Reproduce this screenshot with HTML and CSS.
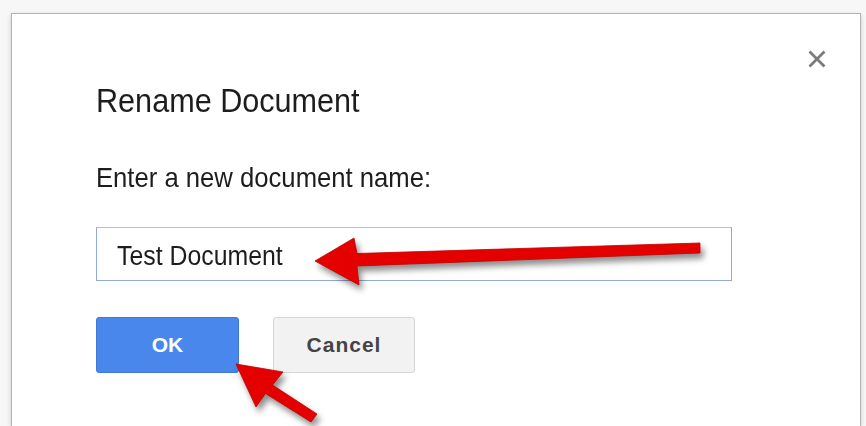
FILE: index.html
```html
<!DOCTYPE html>
<html lang="en">
<head>
<meta charset="utf-8">
<title>Rename Document</title>
<link rel="stylesheet" href="styles.css">
</head>
<body>
  <div class="dialog" role="dialog" aria-labelledby="dlg-title">
    <button class="close" aria-label="Close">
      <svg width="20" height="20" viewBox="0 0 20 20">
        <path d="M3.5 3.5 L16.5 16.5 M16.5 3.5 L3.5 16.5" stroke="#7c7c7c" stroke-width="2.8" stroke-linecap="square" fill="none"/>
      </svg>
    </button>
    <h1 class="title" id="dlg-title"><span class="cond">Rename Document</span></h1>
    <p class="label"><span class="cond">Enter a new document name:</span></p>
    <div class="field" role="textbox"><span class="cond field-text">Test Document</span></div>
    <div class="actions">
      <button class="btn btn-ok">OK</button>
      <button class="btn btn-cancel">Cancel</button>
    </div>
  </div>

  <!-- red callout arrows drawn over the dialog -->
  <svg class="callouts" width="866" height="426" viewBox="0 0 866 426">
    <g class="arrow">
      <path d="M700 243 L357 253.5 L354 238 L315 261 L359 285 L357 266 L700 253 Z"/>
      <path d="M236 364 L283 372 L272.5 385 L317 414 L311 422 L265.5 393.5 L256 407 Z"/>
    </g>
  </svg>
</body>
</html>
```

FILE: styles.css
```css
html, body {
  margin: 0;
  height: 426px;
  overflow: hidden;
}

body {
  background: #f7f7f7;
  padding: 13px 0 0 11px;
  box-sizing: border-box;
  font-family: "Liberation Sans", Arial, sans-serif;
  color: #1d1d1d;
}

/* the dialog runs on below the visible area, so its bottom edge is open */
.dialog {
  position: relative;
  box-sizing: border-box;
  width: 850px;
  height: 100%;
  background: #fff;
  border: 1px solid #b4b4b4;
  border-bottom: 0;
  box-shadow: 0 2px 5px rgba(0, 0, 0, 0.18);
  padding: 66px 0 0 84px;
}

/* slightly condensed text rendering */
.cond {
  display: inline-block;
  transform: scaleX(0.9);
  transform-origin: left center;
  white-space: nowrap;
}

.close {
  position: absolute;
  top: 35px;
  right: 33px;
  width: 20px;
  height: 20px;
  padding: 0;
  border: 0;
  background: none;
  cursor: pointer;
}

.close svg {
  display: block;
  filter: blur(0.5px);
}

.title {
  margin: 0;
  font-size: 34px;
  line-height: 40px;
  font-weight: normal;
  color: #1d1d1d;
}

.label {
  margin: 40px 0 0;
  font-size: 28.5px;
  line-height: 34px;
  color: #1d1d1d;
}

.field {
  margin-top: 33px;
  box-sizing: border-box;
  width: 636px;
  height: 54px;
  display: flex;
  align-items: center;
  padding: 4px 0 0 20px;
  border: 1px solid #93a9d9;
  border-top-color: #bfbfbf;
  background: #fff;
}

.field-text {
  font-size: 27px;
  transform: scaleX(0.92);
  color: #1d1d1d;
}

.actions {
  margin-top: 36px;
  display: flex;
  gap: 34px;
}

.btn {
  box-sizing: border-box;
  height: 56px;
  border-radius: 3px;
  font-family: "Liberation Sans", Arial, sans-serif;
  font-size: 21px;
  font-weight: bold;
  padding: 0;
  cursor: pointer;
}

.btn-ok {
  width: 143px;
  background: #4a87ec;
  border: 1px solid #3f7ad8;
  color: #fff;
}

.btn-cancel {
  width: 142px;
  background: #f2f2f2;
  border: 1px solid #d6d6d6;
  color: #444;
  letter-spacing: 1px;
}

.callouts {
  position: absolute;
  top: 0;
  left: 0;
  pointer-events: none;
}

.arrow {
  fill: #e50000;
  stroke: #c20000;
  stroke-width: 0.8;
  stroke-linejoin: round;
  filter: drop-shadow(3px 5px 3px rgba(0, 0, 0, 0.45));
}
```
